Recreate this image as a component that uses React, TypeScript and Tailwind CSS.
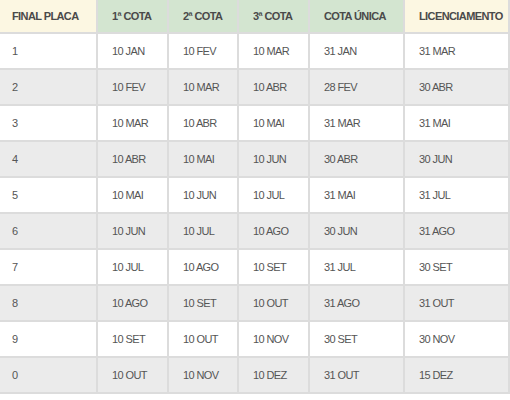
const headers = ["FINAL PLACA", "1ª COTA", "2ª COTA", "3ª COTA", "COTA ÚNICA", "LICENCIAMENTO"]

const rows = [
  ["1", "10 JAN", "10 FEV", "10 MAR", "31 JAN", "31 MAR"],
  ["2", "10 FEV", "10 MAR", "10 ABR", "28 FEV", "30 ABR"],
  ["3", "10 MAR", "10 ABR", "10 MAI", "31 MAR", "31 MAI"],
  ["4", "10 ABR", "10 MAI", "10 JUN", "30 ABR", "30 JUN"],
  ["5", "10 MAI", "10 JUN", "10 JUL", "31 MAI", "31 JUL"],
  ["6", "10 JUN", "10 JUL", "10 AGO", "30 JUN", "31 AGO"],
  ["7", "10 JUL", "10 AGO", "10 SET", "31 JUL", "30 SET"],
  ["8", "10 AGO", "10 SET", "10 OUT", "31 AGO", "31 OUT"],
  ["9", "10 SET", "10 OUT", "10 NOV", "30 SET", "30 NOV"],
  ["0", "10 OUT", "10 NOV", "10 DEZ", "31 OUT", "15 DEZ"],
]

const headerBg = ["bg-[#fcf7e2]", "bg-[#d3e5d0]", "bg-[#d3e5d0]", "bg-[#d3e5d0]", "bg-[#d3e5d0]", "bg-[#fcf7e2]"]

export default function App() {
  return (
    <div className="w-[510px] h-[400px] bg-white overflow-hidden font-['Liberation_Sans',Arial,sans-serif] text-[11px] text-[#555] tracking-[-0.6px]">
      <div className="grid grid-cols-[98px_71px_70px_71px_95px_105px]">
        {headers.map((h, i) => (
          <div
            key={h}
            className={`${headerBg[i]} ${i === 0 ? "pl-[12px]" : "pl-[14px]"} h-[34px] flex items-center font-bold text-[#4a4a4a] border-b-2 border-r-2 border-[#dcdcdc]`}
          >
            {h}
          </div>
        ))}
        {rows.map((row, r) =>
          row.map((cell, c) => (
            <div
              key={`${r}-${c}`}
              className={`${r % 2 === 1 ? "bg-[#ebebeb]" : "bg-white"} ${c === 0 ? "pl-[12px]" : "pl-[14px]"} h-[36px] flex items-center pt-[1px] border-b-2 border-r-2 border-[#dcdcdc]`}
            >
              {cell}
            </div>
          ))
        )}
      </div>
    </div>
  )
}
